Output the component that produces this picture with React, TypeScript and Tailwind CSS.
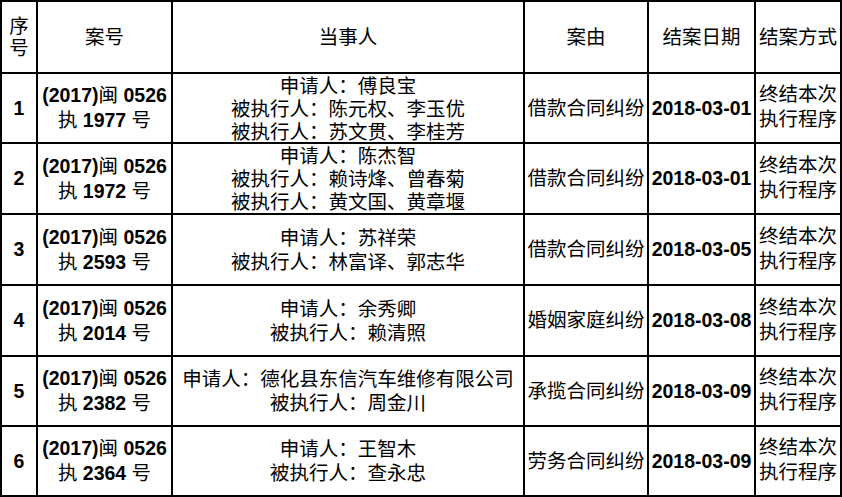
import React from "react";

type Row = {
  no: string;
  year: string;
  num: string;
  parties: string[];
  reason: string;
  date: string;
};

const rows: Row[] = [
  { no: "1", year: "0526", num: "1977", parties: ["申请人：傅良宝", "被执行人：陈元权、李玉优", "被执行人：苏文贯、李桂芳"], reason: "借款合同纠纷", date: "2018-03-01" },
  { no: "2", year: "0526", num: "1972", parties: ["申请人：陈杰智", "被执行人：赖诗烽、曾春菊", "被执行人：黄文国、黄章堰"], reason: "借款合同纠纷", date: "2018-03-01" },
  { no: "3", year: "0526", num: "2593", parties: ["申请人：苏祥荣", "被执行人：林富译、郭志华"], reason: "借款合同纠纷", date: "2018-03-05" },
  { no: "4", year: "0526", num: "2014", parties: ["申请人：余秀卿", "被执行人：赖清照"], reason: "婚姻家庭纠纷", date: "2018-03-08" },
  { no: "5", year: "0526", num: "2382", parties: ["申请人：德化县东信汽车维修有限公司", "被执行人：周金川"], reason: "承揽合同纠纷", date: "2018-03-09" },
  { no: "6", year: "0526", num: "2364", parties: ["申请人：王智木", "被执行人：查永忠"], reason: "劳务合同纠纷", date: "2018-03-09" },
];

const cell = "border-r-2 border-b-2 border-black flex flex-col items-center justify-center text-center";

export default function App() {
  return (
    <div
      className="w-[842px] h-[497px] bg-white text-black text-[19.5px] leading-[25px] grid grid-cols-[36px_135px_352px_124px_107px_86px] grid-rows-[72px_70px_71px_71px_71px_70px_70px] border-l-2 border-t-2 border-black overflow-hidden"
      style={{ fontFamily: '"Liberation Sans", "Noto Sans CJK SC", sans-serif' }}
    >
      {/* 表头 */}
      <div className={`${cell} leading-[22px]`}>
        <span>序</span>
        <span>号</span>
      </div>
      <div className={cell}>案号</div>
      <div className={cell}>当事人</div>
      <div className={cell}>案由</div>
      <div className={cell}>结案日期</div>
      <div className={cell}>结案方式</div>

      {rows.map((r) => (
        <React.Fragment key={r.no}>
          <div className={cell}>
            <b>{r.no}</b>
          </div>
          <div className={cell}>
            <span>
              <b>(2017)</b>闽 <b>{r.year}</b>
            </span>
            <span>
              执 <b>{r.num}</b> 号
            </span>
          </div>
          <div className={`${cell} ${r.parties.length > 2 ? "leading-[23px] pt-[2px]" : "leading-[24px]"}`}>
            {r.parties.map((p) => (
              <span key={p} className="shrink-0">{p}</span>
            ))}
          </div>
          <div className={cell}>{r.reason}</div>
          <div className={cell}>
            <b>{r.date}</b>
          </div>
          <div className={`${cell} pb-0.5`}>
            <span>终结本次</span>
            <span>执行程序</span>
          </div>
        </React.Fragment>
      ))}
    </div>
  );
}
